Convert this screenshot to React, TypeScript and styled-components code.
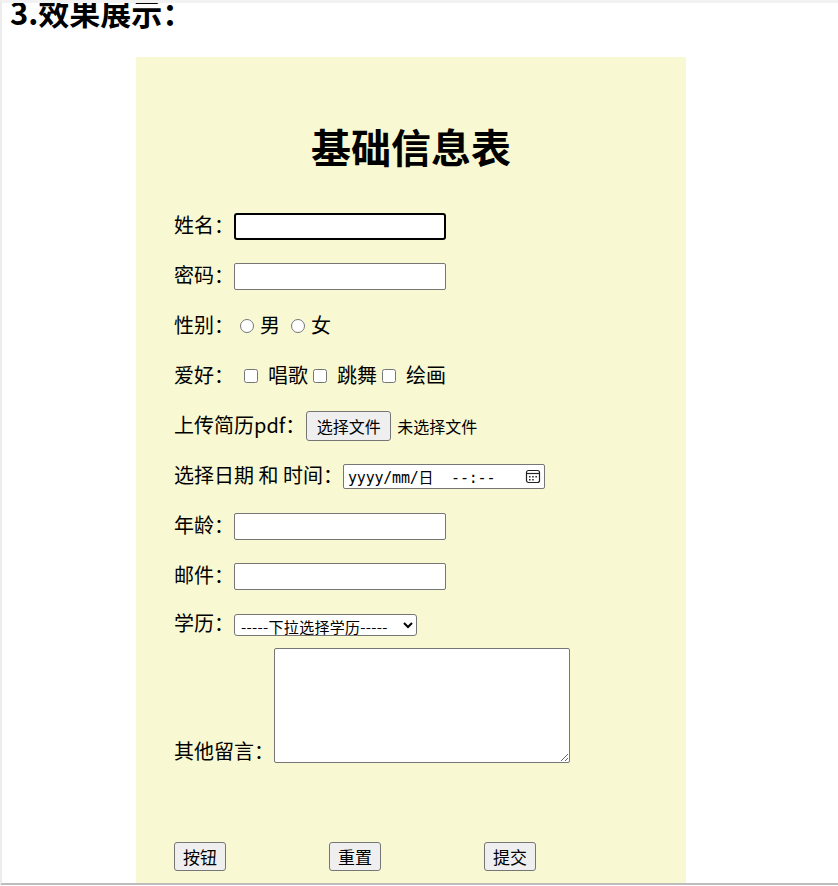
import React from 'react';
import styled, { createGlobalStyle } from 'styled-components';

const GlobalStyle = createGlobalStyle`
  html, body {
    margin: 0;
    padding: 0;
    background: #ffffff;
  }
  body {
    font-family: "Noto Sans CJK SC", "Noto Sans", sans-serif;
    color: #000;
  }
`;

const Frame = styled.div`
  height: 880px;
  overflow: hidden;
  border-top: 3px solid #f2f2f2;
  border-left: 2px solid #ececec;
  border-bottom: 2px solid #bdbdbd;
  background: #fff;
`;

const Heading = styled.h3`
  margin: -10px 0 0 8px;
  font-size: 31px;
  line-height: 37px;
  font-weight: 700;
`;

const FormBox = styled.form`
  margin: 27px 0 0 134px;
  width: 550px;
  height: 840px;
  box-sizing: border-box;
  padding-left: 38px;
  background: #f8f8d2;
`;

const Title = styled.h1`
  margin: 0 0 35px -38px;
  padding-top: 69px;
  font-size: 40px;
  line-height: 40px;
  font-weight: 700;
  text-align: center;
`;

const Row = styled.div<{ h?: number }>`
  display: flex;
  align-items: center;
  height: ${p => p.h ?? 50}px;
  font-size: 20px;
`;

const Label = styled.span<{ gap?: number }>`
  margin-right: ${p => p.gap ?? 0}px;
  padding-bottom: 4px;
  white-space: nowrap;
`;

const Text = styled.span`
  padding-bottom: 4px;
`;

const TextInput = styled.input<{ focused?: boolean }>`
  width: 212px;
  height: 27px;
  box-sizing: border-box;
  margin: 0;
  background: #fff;
  border: ${p => (p.focused ? '2px solid #000' : '1px solid #767676')};
  border-radius: ${p => (p.focused ? 3 : 2)}px;
  outline: none;
  font-size: 15px;
`;

const Choice = styled.input<{ before: number; after: number }>`
  width: 14px;
  height: 14px;
  margin: 0 ${p => p.after}px 0 ${p => p.before}px;
`;

const FileButton = styled.span`
  display: inline-flex;
  align-items: center;
  justify-content: center;
  width: 85px;
  height: 30px;
  box-sizing: border-box;
  border: 1px solid #767676;
  border-radius: 3px;
  background: #efefef;
  font-size: 16px;
  margin-right: 6px;
`;

const Hint = styled.span`
  font-size: 16px;
`;

const DateBox = styled.div`
  display: flex;
  align-items: center;
  width: 202px;
  height: 25px;
  box-sizing: border-box;
  padding: 0 3px 0 4px;
  background: #fff;
  border: 1px solid #767676;
  border-radius: 2px;
  font-family: "DejaVu Sans Mono", "Liberation Mono", "Noto Sans CJK SC", monospace;
  font-size: 15px;
  letter-spacing: -0.2px;
  white-space: pre;
`;

const DateText = styled.span`
  flex: 1;
`;

const Select = styled.select`
  width: 183px;
  height: 22px;
  box-sizing: border-box;
  margin: 0;
  padding: 0 0 0 2px;
  background: #fff;
  border: 1px solid #767676;
  border-radius: 3px;
  font-family: "Noto Sans CJK SC", sans-serif;
  font-size: 15px;
  letter-spacing: 0.3px;
  color: #000;
`;

const TextArea = styled.textarea`
  width: 296px;
  height: 115px;
  box-sizing: border-box;
  margin: 0;
  background: #fff;
  border: 1px solid #767676;
  border-radius: 2px;
  resize: both;
`;

const AreaRow = styled.div`
  display: flex;
  align-items: flex-end;
  font-size: 20px;
  line-height: 20px;
`;

const AreaLabel = styled.span`
  padding-bottom: 2px;
`;

const Buttons = styled.div`
  display: flex;
  gap: 103px;
  margin-top: 79px;
`;

const Button = styled.button`
  width: 52px;
  height: 29px;
  padding: 0;
  box-sizing: border-box;
  border: 1px solid #767676;
  border-radius: 3px;
  background: #efefef;
  font-family: "Noto Sans CJK SC", sans-serif;
  font-size: 17px;
  color: #000;
`;

const CalendarIcon = () => (
  <svg width="16" height="16" viewBox="0 0 16 16" fill="none">
    <rect x="1.5" y="2.5" width="13" height="12" rx="2" stroke="#222" strokeWidth="1.2" />
    <line x1="1.5" y1="5.5" x2="14.5" y2="5.5" stroke="#222" strokeWidth="1.2" />
    <rect x="4" y="8" width="1.5" height="1.5" fill="#222" />
    <rect x="7.2" y="8" width="1.5" height="1.5" fill="#222" />
    <rect x="10.4" y="8" width="1.5" height="1.5" fill="#222" />
    <rect x="4" y="11" width="1.5" height="1.5" fill="#222" />
    <rect x="7.2" y="11" width="1.5" height="1.5" fill="#222" />
  </svg>
);

const App: React.FC = () => {
  return (
    <>
      <GlobalStyle />
      <Frame>
        <Heading>3.效果展示：</Heading>
        <FormBox onSubmit={e => e.preventDefault()}>
          <Title>基础信息表</Title>

          <Row>
            <Label>姓名：</Label>
            <TextInput type="text" focused />
          </Row>
          <Row>
            <Label>密码：</Label>
            <TextInput type="password" />
          </Row>
          <Row>
            <Label>性别：</Label>
            <Choice type="radio" name="sex" before={6} after={6} />
            <Text>男</Text>
            <Choice type="radio" name="sex" before={11} after={6} />
            <Text>女</Text>
          </Row>
          <Row>
            <Label>爱好：</Label>
            <Choice type="checkbox" before={10} after={10} />
            <Text>唱歌</Text>
            <Choice type="checkbox" before={5} after={10} />
            <Text>跳舞</Text>
            <Choice type="checkbox" before={5} after={10} />
            <Text>绘画</Text>
          </Row>
          <Row>
            <Label gap={1}>上传简历pdf：</Label>
            <FileButton>选择文件</FileButton>
            <Hint>未选择文件</Hint>
          </Row>
          <Row>
            <Label>选择日期 和 时间：</Label>
            <DateBox>
              <DateText>{'yyyy/mm/日  --:--'}</DateText>
              <CalendarIcon />
            </DateBox>
          </Row>
          <Row>
            <Label>年龄：</Label>
            <TextInput type="text" />
          </Row>
          <Row>
            <Label>邮件：</Label>
            <TextInput type="email" />
          </Row>
          <Row h={47}>
            <Label>学历：</Label>
            <Select defaultValue="">
              <option value="">-----下拉选择学历-----</option>
              <option value="1">本科</option>
              <option value="2">硕士</option>
            </Select>
          </Row>
          <AreaRow>
            <AreaLabel>其他留言：</AreaLabel>
            <TextArea />
          </AreaRow>
          <Buttons>
            <Button type="button">按钮</Button>
            <Button type="reset">重置</Button>
            <Button type="submit">提交</Button>
          </Buttons>
        </FormBox>
      </Frame>
    </>
  );
};

export default App;
